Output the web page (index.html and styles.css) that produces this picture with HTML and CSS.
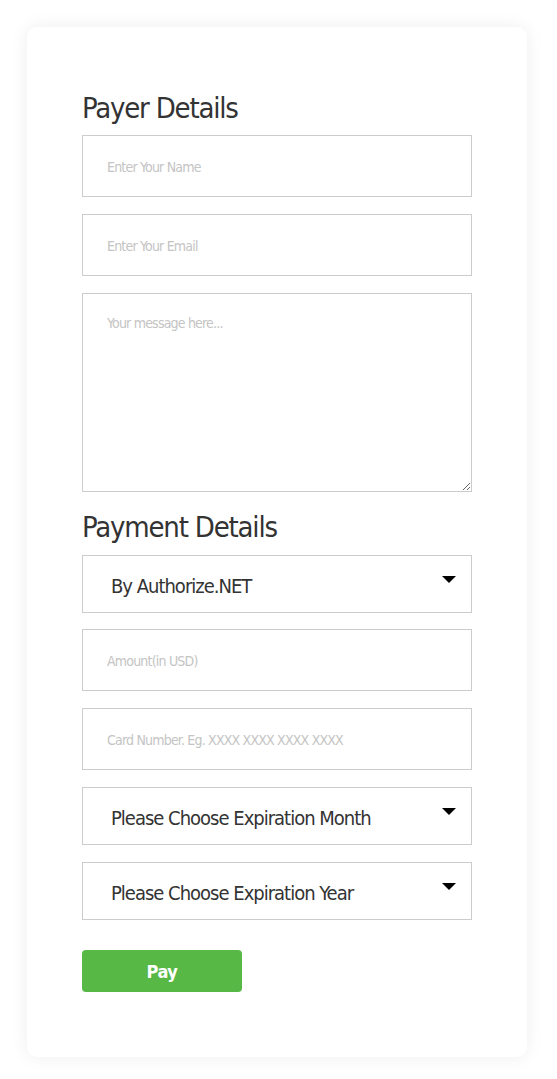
FILE: index.html
```html
<!DOCTYPE html>
<html lang="en">
<head>
<meta charset="utf-8">
<title>Payment</title>
<link rel="stylesheet" href="styles.css">
</head>
<body>
<div class="page">
  <form class="card">
    <h2 class="title">Payer Details</h2>
    <input class="field" type="text" placeholder="Enter Your Name">
    <input class="field" type="email" placeholder="Enter Your Email">
    <textarea class="field area" placeholder="Your message here..."></textarea>
    <h2 class="title title-pay">Payment Details</h2>
    <div class="select-wrap select-first">
      <select class="select"><option>By Authorize.NET</option></select>
    </div>
    <input class="field" type="text" placeholder="Amount(in USD)">
    <input class="field" type="text" placeholder="Card Number. Eg. XXXX XXXX XXXX XXXX">
    <div class="select-wrap">
      <select class="select"><option>Please Choose Expiration Month</option></select>
    </div>
    <div class="select-wrap">
      <select class="select"><option>Please Choose Expiration Year</option></select>
    </div>
    <button class="pay" type="button">Pay</button>
  </form>
</div>
</body>
</html>
```
FILE: styles.css
```css
* { box-sizing: border-box; }
html, body { margin: 0; padding: 0; background: #fff; }
body {
  font-family: "DejaVu Sans Condensed", "Liberation Sans Narrow", "Liberation Sans", sans-serif;
  font-stretch: condensed;
}
.page {
  padding: 27px 30px 22px 27px;
}
.card {
  width: 500px;
  height: 1030px;
  background: #fff;
  border-radius: 10px;
  box-shadow: 0 0 18px rgba(0, 0, 0, 0.07);
  padding: 63px 55px 0 55px;
  display: flex;
  flex-direction: column;
}
.title {
  margin: 0 0 9px 0;
  font-weight: 400;
  font-size: 29px;
  line-height: 36px;
  color: #333;
  letter-spacing: -1.2px;
}
.title-pay { margin-top: 17px; margin-bottom: 10px; }
.field {
  display: block;
  width: 390px;
  height: 62px;
  border: 1px solid #ccc;
  border-radius: 0;
  padding: 1px 24px 0 24px;
  margin: 0 0 17px 0;
  font-family: inherit;
  font-stretch: condensed;
  font-size: 14px;
  letter-spacing: -0.8px;
  color: #333;
  outline: none;
  background: #fff;
}
.field::placeholder { color: #c4c4c4; }
.area {
  height: 199px;
  padding-top: 21px;
  resize: vertical;
  margin-bottom: 0;
}
.select-wrap {
  position: relative;
  width: 390px;
  margin-bottom: 17px;
}
.select-first { margin-bottom: 16px; }
.select-wrap::after {
  content: "";
  position: absolute;
  right: 16px;
  top: 21px;
  border-left: 7px solid transparent;
  border-right: 7px solid transparent;
  border-top: 7px solid #000;
  pointer-events: none;
}
.select {
  appearance: none;
  -webkit-appearance: none;
  display: block;
  width: 390px;
  height: 58px;
  border: 1px solid #ccc;
  border-radius: 0;
  background: #fff;
  padding: 3px 28px 0 28px;
  font-family: inherit;
  font-stretch: condensed;
  font-size: 20px;
  letter-spacing: -1px;
  color: #333;
  outline: none;
}
.pay {
  margin-top: 13px;
  width: 160px;
  height: 42px;
  border: 0;
  border-radius: 4px;
  background: #57b846;
  color: #fff;
  font-family: inherit;
  font-stretch: condensed;
  font-size: 18px;
  font-weight: 700;
  letter-spacing: -0.5px;
  cursor: pointer;
}
```
